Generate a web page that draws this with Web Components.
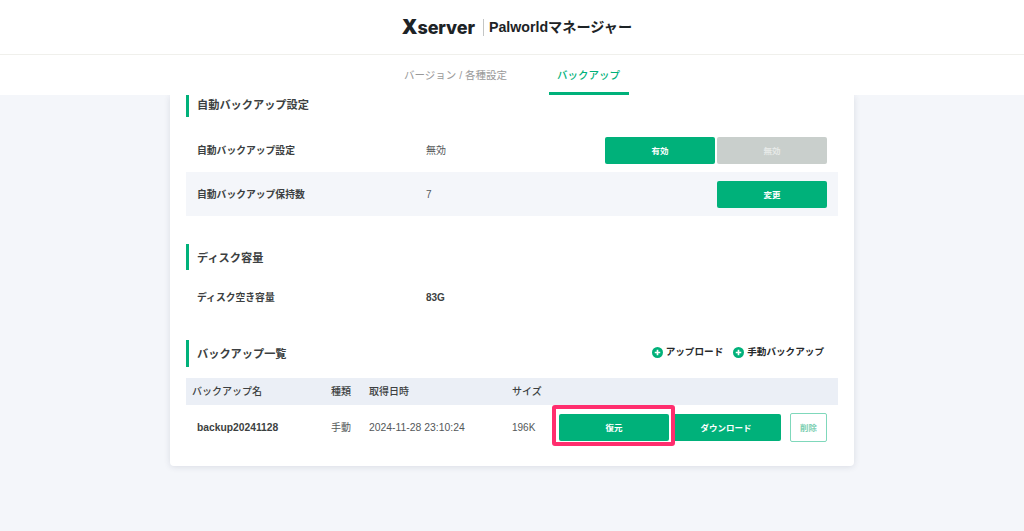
<!DOCTYPE html>
<html lang="ja">
<head>
<meta charset="utf-8">
<title>Palworldマネージャー</title>
<style>
    html, body { margin: 0; height: 531px; overflow: hidden; background: #f4f6fa; }
    body {
        font-family: "Liberation Sans", "Noto Sans CJK JP", "Noto Sans", sans-serif;
        color: #3c3f41;
        font-size: 10px;
    }
</style>
</head>
<body>
<app-header></app-header>
<app-tabs></app-tabs>
<app-card>
    <app-section heading="自動バックアップ設定" first>
        <app-row label="自動バックアップ設定" value="無効" lift>
            <app-btn>有効</app-btn><app-btn kind="off">無効</app-btn>
        </app-row>
        <app-row label="自動バックアップ保持数" value="7" shade>
            <app-btn>変更</app-btn>
        </app-row>
    </app-section>
    <app-section heading="ディスク容量">
        <app-row label="ディスク空き容量" value="83G" strong></app-row>
    </app-section>
    <app-section heading="バックアップ一覧" tall>
        <app-link slot="actions">アップロード</app-link>
        <app-link slot="actions">手動バックアップ</app-link>
        <backup-table></backup-table>
    </app-section>
</app-card>

<script>
const tmplHeader = document.createElement('template');
tmplHeader.innerHTML = `
    <style>
        :host { display:flex; justify-content:center; align-items:center; height:54px; padding-left:10px; box-sizing:content-box; background:#fff; border-bottom:1px solid #f0f0ec; }
        .logo { font:800 18px/1 Inter, "Liberation Sans", sans-serif; color:#1d2326; letter-spacing:-0.1px; }
        .logo b { font-weight:900; font-size:20px; }
        .sep { width:1px; height:17px; background:#c4c6c6; margin:0 5px 0 8px; }
        .name { font:700 14.2px/1 "Liberation Sans", "Noto Sans CJK JP", sans-serif; color:#1d2326; }
    </style>
    <span class="logo"><b>X</b>server</span><span class="sep"></span><span class="name">Palworldマネージャー</span>
`;
class AppHeader extends HTMLElement {
    constructor() {
        super()
        this.attachShadow({ mode: 'open' })
        this.shadowRoot.appendChild(tmplHeader.content.cloneNode(true))
    }
}

const tmplTabs = document.createElement('template');
tmplTabs.innerHTML = `
    <style>
        :host { display:flex; justify-content:center; height:40px; background:#fff; position:relative; z-index:1; padding-left:8px; box-sizing:border-box; }
        div { display:flex; align-items:center; justify-content:center; box-sizing:border-box; font-size:10.5px; font-weight:400; color:#999; border-bottom:3px solid transparent; padding-top:1px; }
        .tab1 { width:104px; margin-right:41px; }
        .tab2 { width:80px; font-weight:500; color:#00b17a; border-color:#00b17a; }
    </style>
    <div class="tab1">バージョン / 各種設定</div>
    <div class="tab2">バックアップ</div>
`;
class AppTabs extends HTMLElement {
    constructor() {
        super()
        this.attachShadow({ mode: 'open' })
        this.shadowRoot.appendChild(tmplTabs.content.cloneNode(true))
    }
}

const tmplCard = document.createElement('template');
tmplCard.innerHTML = `
    <style>
        :host { display:block; box-sizing:border-box; width:684px; height:371px; margin-left:170px; padding:0 16px; background:#fff; border-radius:0 0 4px 4px; box-shadow:0 1px 6px rgba(30,40,70,.12); }
    </style>
    <slot></slot>
`;
class AppCard extends HTMLElement {
    constructor() {
        super()
        this.attachShadow({ mode: 'open' })
        this.shadowRoot.appendChild(tmplCard.content.cloneNode(true))
    }
}

const tmplSection = document.createElement('template');
tmplSection.innerHTML = `
    <style>
        :host { display:block; margin-top:28px; }
        :host([first]) { margin-top:0; }
        :host(:last-child) { margin-top:21px; }
        .head { display:flex; align-items:center; justify-content:space-between; height:26px; box-sizing:border-box; border-left:3px solid #00b17a; padding-left:8px; margin-bottom:5px; }
        :host([first]) .head { height:22px; margin-bottom:11px; align-items:flex-start; }
        :host([first]) h2 { line-height:21px; }
        :host([tall]) .head { height:27px; margin-bottom:11px; }
        :host([tall]) h2 { padding-bottom:2px; }
        h2 { margin:0; font-size:11.2px; font-weight:700; color:#3c3f41; }
        .actions { display:flex; gap:10px; padding-right:14px; margin-top:-6px; }
    </style>
    <div class="head"><h2 id="title"></h2><div class="actions"><slot name="actions"></slot></div></div>
    <slot></slot>
`;
class AppSection extends HTMLElement {
    constructor() {
        super()
        this.attachShadow({ mode: 'open' })
        this.shadowRoot.appendChild(tmplSection.content.cloneNode(true))
    }
    connectedCallback() {
        this.shadowRoot.getElementById('title').textContent = this.getAttribute('heading');
    }
}

const tmplRow = document.createElement('template');
tmplRow.innerHTML = `
    <style>
        :host { display:grid; grid-template-columns:229px 1fr auto; align-items:center; height:44px; padding:0 11px; }
        :host([shade]) { background:#f4f6fa; }
        .label { font-size:9.8px; font-weight:700; color:#3c3f41; }
        .value { font-size:10px; color:#54585a; }
        :host([lift]) .value { padding-bottom:2px; }
        :host([strong]) .value { font-weight:700; color:#3c3f41; }
        .btns { display:flex; gap:2px; }
    </style>
    <div class="label" id="label"></div>
    <div class="value" id="value"></div>
    <div class="btns"><slot></slot></div>
`;
class AppRow extends HTMLElement {
    constructor() {
        super()
        this.attachShadow({ mode: 'open' })
        this.shadowRoot.appendChild(tmplRow.content.cloneNode(true))
    }
    connectedCallback() {
        this.shadowRoot.getElementById('label').textContent = this.getAttribute('label');
        this.shadowRoot.getElementById('value').textContent = this.getAttribute('value');
    }
}

const tmplBtn = document.createElement('template');
tmplBtn.innerHTML = `
    <style>
        :host { display:flex; align-items:center; justify-content:center; box-sizing:border-box; width:110px; height:27px; padding-bottom:1px; border-radius:2px; background:#00b17a; color:#fff; font-size:8.5px; font-weight:700; }
        :host([kind="off"]) { background:#c9cfcc; color:#e6e9e7; }
        :host([kind="outline"]) { width:37px; height:29px; background:#fff; color:#7fd0b4; border:1px solid #7fd8bb; }
    </style>
    <slot></slot>
`;
class AppBtn extends HTMLElement {
    constructor() {
        super()
        this.attachShadow({ mode: 'open' })
        this.shadowRoot.appendChild(tmplBtn.content.cloneNode(true))
    }
}

const tmplLink = document.createElement('template');
tmplLink.innerHTML = `
    <style>
        :host { display:flex; align-items:center; gap:3px; font-size:9.6px; font-weight:700; color:#26292b; }
        svg { width:11px; height:11px; flex:none; position:relative; top:2px; }
    </style>
    <svg viewBox="0 0 12 12"><circle cx="6" cy="6" r="6" fill="#00b17a"/><path d="M6 3v6M3 6h6" stroke="#fff" stroke-width="1.8"/></svg>
    <slot></slot>
`;
class AppLink extends HTMLElement {
    constructor() {
        super()
        this.attachShadow({ mode: 'open' })
        this.shadowRoot.appendChild(tmplLink.content.cloneNode(true))
    }
}

const tmplTable = document.createElement('template');
tmplTable.innerHTML = `
    <style>
        :host { display:block; font-size:10px; position:relative; }
        .grid { display:grid; grid-template-columns:145px 38px 143px 1fr; align-items:center; }
        .head { height:27px; background:#ebeff6; font-weight:500; color:#3c3f41; padding-bottom:2px; box-sizing:border-box; }
        .head div:first-child { padding-left:6px; }
        .body { height:45px; color:#54585a; grid-template-columns:145px 38px 143px 47px 1fr; }
        .name { padding-left:11px; font-size:10.3px; font-weight:700; color:#3c3f41; }
        .kind { padding-bottom:2px; }
        .date { font-size:10.4px; }
        .btns { display:flex; gap:2px; align-items:center; position:relative; }
        .btns x-gap { width:5px; }
        .mark { position:absolute; left:-7px; top:-8px; width:123px; height:41px; box-sizing:border-box; border:4px solid #ff2e6e; border-radius:3px; }
    </style>
    <div class="grid head"><div>バックアップ名</div><div>種類</div><div>取得日時</div><div>サイズ</div></div>
    <div class="grid body">
        <div class="name">backup20241128</div><div class="kind">手動</div><div class="date">2024-11-28 23:10:24</div><div>196K</div>
        <div class="btns">
            <app-btn>復元</app-btn><app-btn>ダウンロード</app-btn><x-gap></x-gap><app-btn kind="outline">削除</app-btn>
            <div class="mark"></div>
        </div>
    </div>
`;
class BackupTable extends HTMLElement {
    constructor() {
        super()
        this.attachShadow({ mode: 'open' })
        this.shadowRoot.appendChild(tmplTable.content.cloneNode(true))
    }
}

window.customElements.define('app-header', AppHeader);
window.customElements.define('app-tabs', AppTabs);
window.customElements.define('app-card', AppCard);
window.customElements.define('app-section', AppSection);
window.customElements.define('app-row', AppRow);
window.customElements.define('app-btn', AppBtn);
window.customElements.define('app-link', AppLink);
window.customElements.define('backup-table', BackupTable);
</script>
</body>
</html>
